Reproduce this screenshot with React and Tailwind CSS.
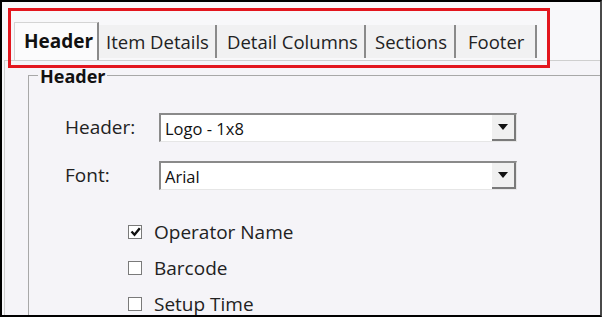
const font = { fontFamily: '"Open Sans", "Noto Sans", sans-serif' };

const tabs = [
  { label: 'Item Details', cls: 'w-[118px] pl-[7px]' },
  { label: 'Detail Columns', cls: 'w-[149px] pl-[10px]' },
  { label: 'Sections', cls: 'w-[90px] pl-[9px]' },
  { label: 'Footer', cls: 'w-[81px] pl-[12px]' },
];

const Select = ({ value }) => (
  <div className="flex h-[29px] w-[358px] border-t-2 border-l-2 border-[#8a8a8a] border-b border-r border-b-[#e6e6e6] border-r-[#e6e6e6] bg-white">
    <div className="flex flex-1 items-center pl-[4px] pt-[2px] text-[16.5px] text-[#111]">{value}</div>
    <div className="flex w-[24px] items-center justify-center border-r-2 border-b-2 border-[#7a7a7a] bg-[#f0f0f0]">
      <svg width="10" height="6" viewBox="0 0 10 6">
        <path d="M0 0h10L5 6z" fill="#111" />
      </svg>
    </div>
  </div>
);

const Check = ({ label, checked }) => (
  <div className="flex h-[36px] items-center">
    <div className="flex h-[14px] w-[14px] items-center justify-center border border-[#7a7a7a] bg-white">
      {checked && (
        <svg width="11" height="10" viewBox="0 0 11 10">
          <path d="M1.5 4.5l3 3.2L9.8 1.2" stroke="#111" strokeWidth="2.4" fill="none" />
        </svg>
      )}
    </div>
    <span className="ml-[12px] text-[19px] text-[#222]">{label}</span>
  </div>
);

export default function App() {
  return (
    <div
      className="relative flex h-[317px] w-[602px] flex-col overflow-hidden border-t-2 border-l-2 border-b-2 border-r-2 border-black border-r-[#4a4a4a] bg-[#f8f8fa]"
      style={font}
    >
      {/* Tab strip */}
      <div className="flex h-[58px] shrink-0 items-start pl-[12px]">
        <div className="mt-[20px] flex h-[38px] w-[85px] items-center border-t border-l border-[#d4d4d4] border-r-2 border-r-[#8a8a8a] bg-[#fbfbfc] pl-[9px] text-[19px] font-bold text-[#111]">
          Header
        </div>
        {tabs.map((t) => (
          <div
            key={t.label}
            className={`mt-[23px] flex h-[33px] items-center border-r-2 border-[#8a8a8a] bg-[#f1f1f2] text-[18.5px] text-[#222] ${t.cls}`}
          >
            {t.label}
          </div>
        ))}
      </div>

      {/* Panel */}
      <div className="ml-[2px] flex flex-1 flex-col border-t border-l border-[#cfcfcf] bg-[#f5f4f8] pl-[23px] pt-[14px]">
        <div className="relative flex flex-1 flex-col border-t border-l border-[#a8a8a8] pl-[36px] pt-[24px]">
          <span className="absolute left-[9px] top-[-11px] bg-[#f5f4f8] px-[2px] text-[18px] font-bold leading-[22px] text-[#111]">
            Header
          </span>
          <div className="mt-[13px] flex items-center">
            <span className="w-[94px] text-[19px] text-[#222]">Header:</span>
            <Select value="Logo - 1x8" />
          </div>
          <div className="mt-[19px] flex items-center">
            <span className="w-[94px] text-[19px] text-[#222]">Font:</span>
            <Select value="Arial" />
          </div>
          <div className="ml-[63px] mt-[24px] flex flex-col">
            <Check label="Operator Name" checked />
            <Check label="Barcode" />
            <Check label="Setup Time" />
          </div>
        </div>
      </div>

      {/* Annotation highlight */}
      <div className="absolute left-[6px] top-[6px] h-[60px] w-[542px] border-[3px] border-[#e3161e]" />
    </div>
  );
}
